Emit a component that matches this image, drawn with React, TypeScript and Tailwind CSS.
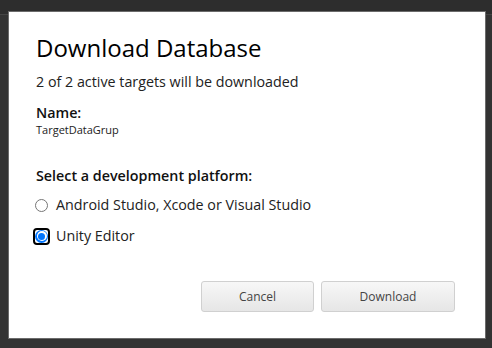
import { useState } from "react";

type Platform = "native" | "unity";

function RadioRow({
  label,
  checked,
  focused,
  onSelect,
}: {
  label: string;
  checked: boolean;
  focused?: boolean;
  onSelect: () => void;
}) {
  return (
    <button
      type="button"
      onClick={onSelect}
      className="flex h-[20px] items-center text-left"
    >
      <span
        className={`flex h-[17px] w-[17px] items-center justify-center rounded-[4px] ${
          focused ? "border-2 border-black" : "border-2 border-transparent"
        }`}
      >
        {checked ? (
          <span className="flex h-[13px] w-[13px] items-center justify-center rounded-full bg-[#0075ff]">
            <span className="flex h-[10px] w-[10px] items-center justify-center rounded-full bg-white">
              <span className="h-[7px] w-[7px] rounded-full bg-[#0075ff]" />
            </span>
          </span>
        ) : (
          <span className="h-[13px] w-[13px] rounded-full border border-[#767676] bg-white" />
        )}
      </span>
      <span className="ml-[6px] text-[14.3px] leading-[20px] text-[#222]">
        {label}
      </span>
    </button>
  );
}

export default function App() {
  const [platform, setPlatform] = useState<Platform>("unity");

  return (
    <div
      className="relative h-[348px] w-[492px] overflow-hidden bg-[#333333]"
      style={{ fontFamily: '"Open Sans", "Liberation Sans", sans-serif' }}
    >
      {/* page behind the modal */}
      <div className="h-[15px] border-b border-[#444] bg-[#2d2d2d]" />

      {/* modal */}
      <div className="absolute left-[8px] top-[11px] flex h-[328px] w-[478px] flex-col border border-[#6b6b6b] bg-white pl-[27px] pr-[30px] pb-[26px] pt-[20px]">
        <h1 className="text-[24px] leading-[32px] font-normal text-black">
          Download Database
        </h1>
        <p className="mt-[8px] text-[14.3px] leading-[20px] text-[#222]">
          2 of 2 active targets will be downloaded
        </p>

        <div className="mt-[11px] text-[14.3px] leading-[20px] font-semibold text-[#111]">
          Name:
        </div>
        <div className="text-[11px] leading-[14px] text-[#222]">
          TargetDataGrup
        </div>

        <div className="mt-[29px] text-[14.3px] leading-[20px] font-semibold text-[#111]">
          Select a development platform:
        </div>

        <div className="mt-[9px] -ml-[3px] flex flex-col gap-[11px]">
          <RadioRow
            label="Android Studio, Xcode or Visual Studio"
            checked={platform === "native"}
            onSelect={() => setPlatform("native")}
          />
          <RadioRow
            label="Unity Editor"
            checked={platform === "unity"}
            focused
            onSelect={() => setPlatform("unity")}
          />
        </div>

        <div className="mt-auto flex justify-end gap-[7px]">
          <button
            type="button"
            className="h-[31px] w-[113px] rounded-[3px] border border-[#d0d0d0] bg-gradient-to-b from-[#f7f7f7] to-[#e6e6e6] text-[12px] text-[#444]"
          >
            Cancel
          </button>
          <button
            type="button"
            className="h-[31px] w-[134px] rounded-[3px] border border-[#d0d0d0] bg-gradient-to-b from-[#f7f7f7] to-[#e6e6e6] text-[12px] text-[#444]"
          >
            Download
          </button>
        </div>
      </div>
    </div>
  );
}
